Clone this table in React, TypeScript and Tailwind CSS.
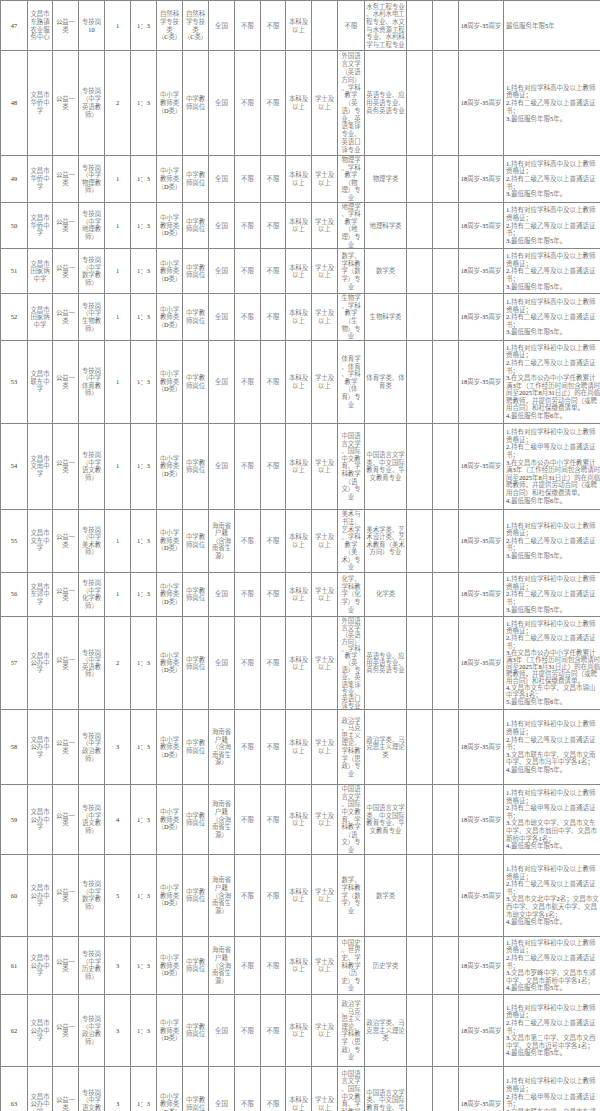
const GY = '公益一|类';
const JS = '中小学|教师类|（D类）';
const GW = '中学教|师岗位';
const HN = '海南省|户籍|（含海|南省生|源）';
const AGE = '18周岁-35周岁';
const post = (s: string) => `专技岗|（中学|${s}教|师）`;

const GAO = '1.持有对应学科高中及以上教师|资格证；|2.持有二级乙等及以上普通话证|书；|3.最低服务年限5年。';
const CHU = '1.持有对应学科初中及以上教师|资格证；|2.持有二级乙等及以上普通话证|书；';
const CHU_J = '1.持有对应学科初中及以上教师|资格证；|2.持有二级甲等及以上普通话证|书；';
const LP = '3.在文昌市公办中小学任教累计|满3年（工作经历时间包含聘请时|间至2025年8月31日止）的在岗临|聘教师，并提供劳动合同（或聘|用合同）和社保缴费清单。';

const EN14 = '外国语|言文学|（英语|方向）|、学科|教学|（英|语）专|业、英|语笔译|专业、|英语口|译专业';
const EN15 = '英语专业、应|用英语专业、|商务英语专业';
const CN14 = '中国语|言文学|、国际|中文教|育、学|科教学|（语|文）专|业';
const CN15 = '中国语言文学|类、中文国际|教育专业、华|文教育专业';
const ZZ14 = '政治学|、马克|思主义|理论、|学科教|学（思|政）专|业';
const ZZ15 = '政治学类、马|克思主义理论|类';

type Row = {
  h: string;
  no: string;
  unit: string;
  post: string;
  n: string;
  huji: string;
  grad: string;
  major: string;
  req: string;
};

const rows: Row[] = [
  { h: 'h-[105px] leading-[7.8px]', no: '48', unit: '文昌市|华侨中|学', post: post('英语'), n: '2', huji: '全国', grad: EN14, major: EN15, req: GAO },
  { h: 'h-[45px]', no: '49', unit: '文昌市|华侨中|学', post: post('物理'), n: '1', huji: '全国', grad: '物理学|、学科|教学|（物|理）专|业', major: '物理学类', req: GAO },
  { h: 'h-[46px]', no: '50', unit: '文昌市|华侨中|学', post: post('地理'), n: '1', huji: '全国', grad: '地理学|、学科|教学|（地|理）专|业', major: '地理科学类', req: GAO },
  { h: 'h-[45px]', no: '51', unit: '文昌市|田家炳|中学', post: post('数学'), n: '1', huji: '全国', grad: '数学、|学科教|学（数|学）专|业', major: '数学类', req: GAO },
  { h: 'h-[45px]', no: '52', unit: '文昌市|田家炳|中学', post: post('生物'), n: '1', huji: '全国', grad: '生物学|、学科|教学|（生|物）专|业', major: '生物科学类', req: GAO },
  { h: 'h-[83px]', no: '53', unit: '文昌市|联东中|学', post: post('体育'), n: '1', huji: '全国', grad: '体育学|、体育|、学科|教学|（体|育）专|业', major: '体育学类、体|育类', req: `${CHU}|${LP}|4.最低服务年限6年。` },
  { h: 'h-[86px]', no: '54', unit: '文昌市|文南中|学', post: post('语文'), n: '1', huji: '全国', grad: CN14, major: CN15, req: `${CHU_J}|${LP}|4.最低服务年限6年。` },
  { h: 'h-[63px]', no: '55', unit: '文昌市|文东中|学', post: post('美术'), n: '1', huji: HN, grad: '美术与|书法、|艺术学|、学科|教学|（美|术）专|业', major: '美术学类、艺|术设计类、艺|术教育（美术|方向）专业', req: `${CHU}|3.最低服务年限5年。` },
  { h: 'h-[44px]', no: '56', unit: '文昌市|东郊中|学', post: post('化学'), n: '1', huji: '全国', grad: '化学、|学科教|学（化|学）专|业', major: '化学类', req: `${CHU}|3.最低服务年限5年。` },
  { h: 'h-[93px] leading-[7.1px]', no: '57', unit: '文昌市|公办中|学', post: post('英语'), n: '2', huji: '全国', grad: EN14, major: EN15, req: `${CHU}|${LP}|4.文昌市文东中学、文昌市锦山|中学各1名；|5.最低服务年限6年。` },
  { h: 'h-[75px]', no: '58', unit: '文昌市|公办中|学', post: post('政治'), n: '3', huji: HN, grad: ZZ14, major: ZZ15, req: `${CHU}|3.文昌市联东中学、文昌市文南|中学、文昌市冯平中学各1名；|4.最低服务年限5年。` },
  { h: 'h-[70px]', no: '59', unit: '文昌市|公办中|学', post: post('语文'), n: '4', huji: HN, grad: CN14, major: CN15, req: `${CHU_J}|3.文昌市琼文中学、文昌市文东|中学、文昌市翁田中学、文昌市|新桥中学各1名；|4.最低服务年限5年。` },
  { h: 'h-[82px]', no: '60', unit: '文昌市|公办中|学', post: post('数学'), n: '5', huji: HN, grad: '数学、|学科教|学（数|学）专|业', major: '数学类', req: `${CHU}|3.文昌市文北中学2名；文昌市文|西中学、文昌市航天中学、文昌|市琼文中学各1名；|4.最低服务年限5年。` },
  { h: 'h-[58px]', no: '61', unit: '文昌市|公办中|学', post: post('历史'), n: '3', huji: HN, grad: '中国史|、世界|史、学|科教学|（历|史）专|业', major: '历史学类', req: `${CHU}|3.文昌市罗峰中学、文昌市东郊|中学、文昌市新桥中学各1名；|4.最低服务年限5年。` },
  { h: 'h-[72px]', no: '62', unit: '文昌市|公办中|学', post: post('政治'), n: '3', huji: '全国', grad: ZZ14, major: ZZ15, req: `${CHU}|3.文昌市第二中学、文昌市文西|中学、文昌市迈号中学各1名；|4.最低服务年限5年。` },
  { h: 'h-[75px]', no: '63', unit: '文昌市|公办中|学', post: post('语文'), n: '3', huji: '全国', grad: CN14, major: CN15, req: `${CHU_J}|3.文昌市联东中学、文昌市东郊|中学、文昌市航天中学各1名；|4.最低服务年限5年。` },
];

function Lines({ text }: { text: string }) {
  return (
    <>
      {text.split('|').map((l, i) => (
        <div key={i} className="whitespace-nowrap">{l}</div>
      ))}
    </>
  );
}

const td = 'border border-[#858585] px-0 py-0 text-center align-middle';

function Cells({ cells }: { cells: string[] }) {
  return (
    <>
      {cells.map((c, i) => (
        <td key={i} className={i === 18 ? `${td} !text-left pl-[2px] text-[6.5px]` : td}>
          <Lines text={c} />
        </td>
      ))}
    </>
  );
}

export default function App() {
  return (
    <div className="w-[600px] h-[1111px] overflow-hidden bg-white">
      <table className="table-fixed border-collapse w-[600px] text-[6.4px] leading-[7.6px] font-light text-[#333] font-['Liberation_Serif','Noto_Sans_CJK_SC',serif]">
        <colgroup>
          <col className="w-[27px]" />
          <col className="w-[25px]" />
          <col className="w-[26px]" />
          <col className="w-[26px]" />
          <col className="w-[26px]" />
          <col className="w-[26px]" />
          <col className="w-[26px]" />
          <col className="w-[26px]" />
          <col className="w-[26px]" />
          <col className="w-[26px]" />
          <col className="w-[25px]" />
          <col className="w-[26px]" />
          <col className="w-[26px]" />
          <col className="w-[27px]" />
          <col className="w-[42px]" />
          <col className="w-[26px]" />
          <col className="w-[26px]" />
          <col className="w-[45px]" />
          <col className="w-[97px]" />
        </colgroup>
        <tbody>
          <tr className="h-[50px]">
            <Cells
              cells={[
                '47', '文昌市|东路镇|农业服|务中心', GY, '专技岗|10', '1', '1：3',
                '自然科|学专技|类|（C类）', '自然科|学专技|类|（C类）', '全国', '不限', '不限',
                '本科及|以上', '', '不限',
                '水务工程专业|、水利水电工|程专业、水文|与水资源工程|专业、水利科|学与工程专业',
                '', '', AGE, '最低服务年限5年',
              ]}
            />
          </tr>
          {rows.map((r) => (
            <tr key={r.no} className={r.h}>
              <Cells
                cells={[
                  r.no, r.unit, GY, r.post, r.n, '1：3', JS, GW, r.huji, '不限', '不限',
                  '本科及|以上', '学士及|以上', r.grad, r.major, '', '', AGE, r.req,
                ]}
              />
            </tr>
          ))}
        </tbody>
      </table>
    </div>
  );
}
